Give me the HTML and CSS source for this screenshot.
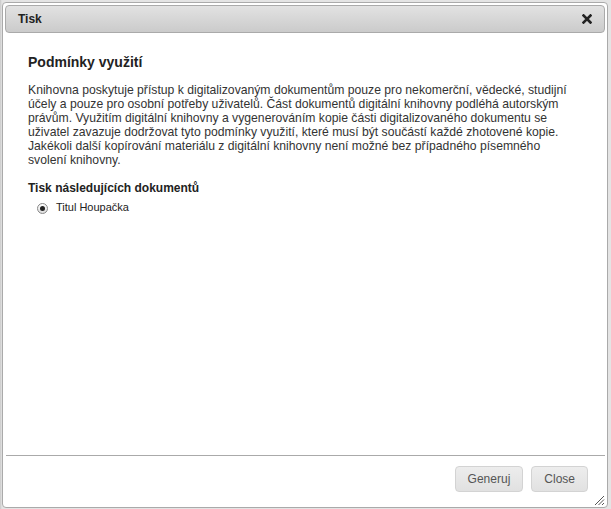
FILE: index.html
```html
<!DOCTYPE html>
<html lang="cs">
<head>
<meta charset="utf-8">
<link rel="stylesheet" href="styles.css">
</head>
<body>
<div class="page">
  <div class="dialog">
    <div class="titlebar">
      <span class="title">Tisk</span>
      <svg class="close-icon" width="10" height="10" viewBox="0 0 10 10"><path d="M1.5 1.5 L8.5 8.5 M8.5 1.5 L1.5 8.5" stroke="#222" stroke-width="2.6" stroke-linecap="square"/></svg>
    </div>
    <div class="content">
      <h2 class="heading">Podmínky využití</h2>
      <p class="terms">Knihovna poskytuje přístup k digitalizovaným dokumentům pouze pro nekomerční, vědecké, studijní účely a pouze pro osobní potřeby uživatelů. Část dokumentů digitální knihovny podléhá autorským právům. Využitím digitální knihovny a vygenerováním kopie části digitalizovaného dokumentu se uživatel zavazuje dodržovat tyto podmínky využití, které musí být součástí každé zhotovené kopie. Jakékoli další kopírování materiálu z digitální knihovny není možné bez případného písemného svolení knihovny.</p>
      <h3 class="subheading">Tisk následujících dokumentů</h3>
      <label class="radio-row"><span class="radio"><span class="dot"></span></span>Titul Houpačka</label>
    </div>
    <div class="buttonpane">
      <button class="btn">Generuj</button>
      <button class="btn">Close</button>
      <svg class="grip" width="11" height="11" viewBox="0 0 11 11"><path d="M10 1 L1 10 M10 4.5 L4.5 10 M10 8 L8 10" stroke="#555" stroke-width="1"/></svg>
    </div>
  </div>
</div>
</body>
</html>
```

FILE: styles.css
```css
html, body {
  margin: 0;
  padding: 0;
}
body {
  background: #d8d8d8;
  font-family: "Liberation Sans", Arial, sans-serif;
}
.page {
  width: 611px;
  height: 509px;
  padding: 2px 0 0 2px;
  box-sizing: border-box;
  background: linear-gradient(to right, #c9c9c9 0, #e4e4e4 2px, #e4e4e4 100%);
}
.dialog {
  width: 606px;
  height: 506px;
  box-sizing: border-box;
  background: #fff;
  border: 1px solid #aaa;
  border-radius: 4px;
  padding: 2px 2px 0 2px;
  display: flex;
  flex-direction: column;
}
.titlebar {
  height: 28px;
  box-sizing: border-box;
  border: 1px solid #aaa;
  border-radius: 4px;
  background: linear-gradient(#e2e2e2, #cbcbcb);
  display: flex;
  align-items: center;
  justify-content: space-between;
  padding: 0 12px 0 12px;
}
.title {
  font-weight: bold;
  font-size: 12px;
  color: #222;
}
.close-icon {
  display: block;
}
.content {
  flex: 1;
  padding: 21px 20px 0 23px;
  color: #333;
}
.heading {
  margin: 0 0 12px 0;
  font-size: 14px;
  line-height: 17px;
  font-weight: bold;
  color: #222;
}
.terms {
  margin: 0 0 14px 0;
  font-size: 12.2px;
  line-height: 14px;
  width: 548px;
}
.subheading {
  margin: 0 0 5px 0;
  font-size: 12px;
  line-height: 14px;
  font-weight: bold;
  color: #222;
}
.radio-row {
  display: flex;
  align-items: center;
  font-size: 11px;
  line-height: 13px;
  color: #222;
  margin-left: 9px;
  gap: 8px;
}
.radio {
  width: 11px;
  height: 11px;
  box-sizing: border-box;
  border: 1px solid #888;
  border-radius: 50%;
  background: linear-gradient(#fff, #ddd);
  display: flex;
  align-items: center;
  justify-content: center;
  margin-top: 3px;
}
.dot {
  width: 5px;
  height: 5px;
  border-radius: 50%;
  background: #222;
}
.buttonpane {
  position: relative;
  height: 52px;
  box-sizing: border-box;
  border-top: 1px solid #aaa;
  display: flex;
  justify-content: flex-end;
  align-items: flex-start;
  gap: 8px;
  padding: 10px 17px 0 0;
  margin: 0 0 0 1px;
}
.btn {
  height: 26px;
  box-sizing: border-box;
  border: 1px solid #d3d3d3;
  border-radius: 4px;
  background: linear-gradient(#ededed, #e1e1e1);
  color: #555;
  font-family: "Liberation Sans", Arial, sans-serif;
  font-size: 12px;
  padding: 0 12px;
  margin: 0;
}
.grip {
  position: absolute;
  right: 0;
  bottom: 1px;
}
```
